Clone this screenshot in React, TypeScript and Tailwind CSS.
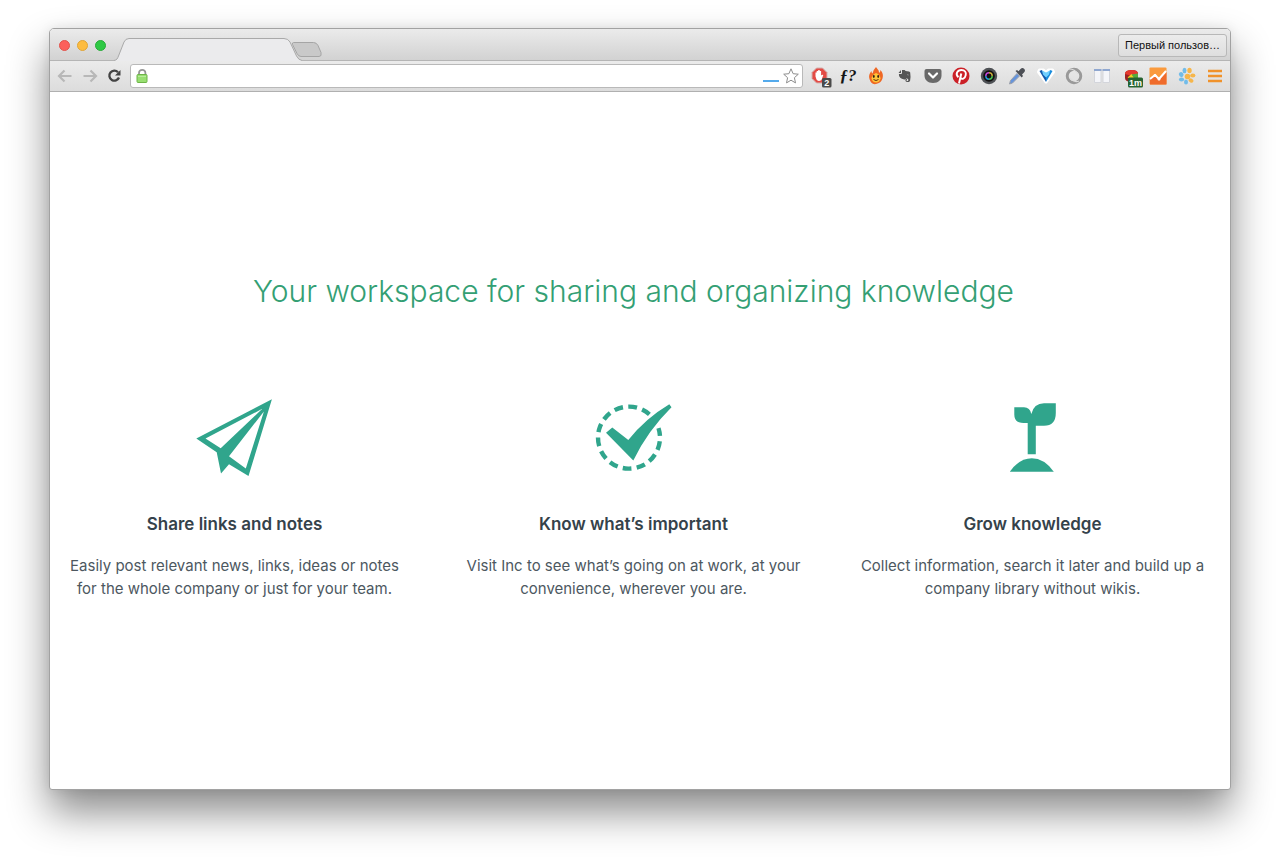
import React from 'react';

const extensionButton = 'flex h-[22px] w-5 items-center justify-center';

function Extension({ label, children }: { label: string; children: React.ReactNode }) {
  return (
    <button type="button" aria-label={label} className={extensionButton}>
      <svg width="22" height="22" viewBox="0 0 22 22" className="shrink-0 overflow-visible" aria-hidden="true">
        {children}
      </svg>
    </button>
  );
}

function TabStrip() {
  return (
    <div className="flex h-[31px] items-end bg-linear-to-b from-[#ebebeb] to-[#d2d2d2]">
      <div className="flex h-full items-center gap-[7px] pt-px pr-2 pl-[9px]">
        <button type="button" aria-label="Close window" className="size-[11px] rounded-full border border-[#e2534c] bg-[#fc605b]" />
        <button type="button" aria-label="Minimize window" className="size-[11px] rounded-full border border-[#e0a536] bg-[#fdbc40]" />
        <button type="button" aria-label="Zoom window" className="size-[11px] rounded-full border border-[#27ab38] bg-[#2ec944]" />
      </div>
      <button type="button" aria-label="Current tab" className="-mb-px h-[23px] w-[188px]">
        <svg width="188" height="23" viewBox="0 0 188 23" aria-hidden="true">
          <path d="M0 22.500C3 22 3.500 20.500 4.500 18L10 4Q11.500.5 15 .5H170Q174 .5 176 4L182.500 18Q184.500 22 188 22.500V23H0Z" fill="#ebebed" />
          <path d="M0 22.500C3 22 3.500 20.500 4.500 18L10 4Q11.500.5 15 .5H170Q174 .5 176 4L182.500 18Q184.500 22 188 22.500" fill="none" stroke="#a9a9a9" />
        </svg>
      </button>
      <button type="button" aria-label="New tab" className="-mb-px -ml-2 h-[23px] w-7">
        <svg width="28" height="23" viewBox="0 0 28 23" className="overflow-visible" aria-hidden="true">
          <path d="M-.5 4.500H19.500Q22.500 4.500 24 7.500L27 14.500Q28 18.500 25 18.500H7Q4.500 18.500 3 15.500L-1.500 6.500Q-2 4.500-.5 4.500Z" fill="#c9c9c9" stroke="#a5a5a5" />
        </svg>
      </button>
      <button type="button" className="mr-[3px] mb-[3px] ml-auto h-[23px] rounded-[3px] border border-[#b8b8b8] bg-linear-to-b from-[#ececec] to-[#dedede] px-[6px] font-['Liberation_Sans',Arial,sans-serif] text-[11px] whitespace-nowrap text-[#111]">
        Первый пользов…
      </button>
    </div>
  );
}

function AddressBar() {
  return (
    <div className="flex h-8 items-center border-t border-b border-t-[#b5b5b5] border-b-[#b0b0b0] bg-linear-to-b from-[#ebebeb] to-[#dcdcdc] pr-[5px] pl-[7px]">
      <div className="flex shrink-0 items-center gap-[9px] pr-[7px]">
        <button type="button" aria-label="Back" className="size-4">
          <svg width="16" height="16" viewBox="0 0 16 16" fill="none" stroke="#b8b8b8" strokeWidth="2.200" aria-hidden="true">
            <path d="M14.500 8H3M7.500 2.500 2 8l5.500 5.500" />
          </svg>
        </button>
        <button type="button" aria-label="Forward" className="size-4">
          <svg width="16" height="16" viewBox="0 0 16 16" fill="none" stroke="#b8b8b8" strokeWidth="2.200" aria-hidden="true">
            <path d="M1.500 8H13M8.500 2.500 14 8l-5.500 5.500" />
          </svg>
        </button>
        <button type="button" aria-label="Reload" className="size-4">
          <svg width="16" height="16" viewBox="0 0 16 16" aria-hidden="true">
            <path d="M11 4.200A5 5 0 1 0 12 9.500" fill="none" stroke="#444" strokeWidth="2.300" />
            <path d="M13.500 2v5.500H8Z" fill="#444" />
          </svg>
        </button>
      </div>
      <label className="flex h-6 min-w-0 flex-1 items-center rounded-[3px] border border-[#b9b9b9] bg-white pr-[3px] pl-1">
        <svg width="14" height="16" viewBox="0 0 14 16" className="shrink-0" aria-hidden="true">
          <path d="M4 7V5a3.200 3.200 0 0 1 6.400 0v2" fill="none" stroke="#969696" strokeWidth="1.800" />
          <rect x="2" y="6.500" width="10" height="8" rx="1" fill="#98df71" stroke="#6db448" />
          <path d="M3 8.500h8" stroke="#b8ec9b" />
        </svg>
        <input aria-label="Address" type="text" className="min-w-0 flex-1 bg-transparent px-1 font-['Liberation_Sans',Arial,sans-serif] text-sm outline-none" />
        <span className="mt-[10px] h-[2px] w-4 shrink-0 bg-[#54aaec]" />
        <button type="button" aria-label="Bookmark this page" className="ml-1 size-4 shrink-0">
          <svg width="16" height="16" viewBox="0 0 16 16" aria-hidden="true">
            <path d="m8 .8 2.100 4.900 5.200.5-3.900 3.500 1.100 5.200L8 12.200l-4.500 2.700 1.100-5.200L.7 6.200l5.200-.5Z" fill="#fff" stroke="#8d8d8d" strokeLinejoin="round" />
          </svg>
        </button>
      </label>
      <div className="ml-[7px] flex w-[415px] shrink-0 items-center justify-between">
        <Extension label="Ad blocker, 2 blocked">
          <path d="M7.500 3h6l4.500 4.500v6L13.500 18h-6L3 13.500v-6Z" fill="#e34b45" stroke="#d2b3b1" />
          <path d="M6.500 11.500V7.500h1.200V6h1.500V5h1.500v1h1.400v4.500q1-1.200 2.200-.5L12.500 15q-3.500 2-5-.5Z" fill="#fff" />
          <rect x="13" y="13" width="9.500" height="9.500" rx="1.500" fill="#4a4a4a" />
          <text x="17.700" y="21" textAnchor="middle" fill="#fff" fontFamily="Liberation Sans" fontWeight="bold" fontSize="9">2</text>
        </Extension>
        <Extension label="Font finder">
          <text x="11" y="16" textAnchor="middle" fill="#151515" fontFamily="Liberation Serif" fontStyle="italic" fontWeight="bold" fontSize="17">ƒ?</text>
        </Extension>
        <Extension label="Flame">
          <path d="M11 2C13 5 14 5 14 8q1.500-1 1.500-3 3.500 4 2 8.500T11 19 4.500 14Q3 10 6.500 6q0 2 1 2.500Q8 5 11 2Z" fill="#ef6724" />
          <path d="M11 8q4.500 2 4.500 5.500-1 4-4.500 4t-4.500-4Q7 10 11 8Z" fill="#ffc539" />
          <ellipse cx="8.800" cy="11.500" rx=".9" ry="1.400" fill="#312016" />
          <ellipse cx="13.200" cy="11.500" rx=".9" ry="1.400" fill="#312016" />
          <path d="M8.500 14.500q2.500 2 5 0" fill="none" stroke="#5b2b15" />
        </Extension>
        <Extension label="Web clipper">
          <path d="M8 5h2.200q1 .2 1.300.9l3.500.5q1 .3 1.200 1.200.7 4.200-.1 8.200-.4 1.200-1.600 1.100h-1.700q-1.600-.2-1.400-1.800.2-1.300 1.600-1.200v1.200q-.6 0-.5.6.1.4.7.4h1v-2q-1-1-2-.6-.7 1.300-2 .9-2.600-.4-4-1.700Q4.700 11.500 4.900 9H7q1 0 1-1Z" fill="#555" />
          <path d="M7 5V8H4.500Z" fill="#555" />
          <path d="M13 10q1-1 1.800.3Z" fill="#eee" />
        </Extension>
        <Extension label="Save to reading list">
          <path d="M4.500 4h13q2 0 2 2v4.500c0 4.200-3 7.500-8.500 7.500s-8.500-3.300-8.500-7.500V6q0-2 2-2Z" fill="#696969" />
          <path d="m7 8.500 4 4 4-4" fill="none" stroke="#fff" strokeWidth="2.200" strokeLinecap="round" strokeLinejoin="round" />
        </Extension>
        <Extension label="Pin it">
          <circle cx="11" cy="11" r="8.500" fill="#cb2027" />
          <path d="M9 18.500 11.300 8.500" fill="none" stroke="#fff" strokeWidth="2" />
          <path d="M8.400 12.200C4.800 9 7.500 5 11.400 5c3.500 0 5 2.300 4.300 5.200-.6 3.500-3.900 4.800-5.400 2.500" fill="none" stroke="#fff" strokeWidth="1.900" />
        </Extension>
        <Extension label="Camera">
          <circle cx="11" cy="11" r="8.200" fill="#4e5155" />
          <circle cx="11" cy="11" r="5.800" fill="#111" />
          <path d="M7.800 11a3.200 3.200 0 0 1 3.200-3.200" fill="none" stroke="#c244d8" strokeWidth="1.500" />
          <path d="M11 7.800a3.200 3.200 0 0 1 3.200 3.200" fill="none" stroke="#c9a93b" strokeWidth="1.500" />
          <path d="M14.200 11a3.200 3.200 0 0 1-3.200 3.200" fill="none" stroke="#48bd54" strokeWidth="1.500" />
          <path d="M11 14.200A3.200 3.200 0 0 1 7.800 11" fill="none" stroke="#2495d4" strokeWidth="1.500" />
        </Extension>
        <Extension label="Eyedropper">
          <path d="m11 8.500 2.500 2.500-7 7-3 1 1-3.500Z" fill="#6594dc" stroke="#9a9fa9" />
          <path d="m9.500 6 1.500-1 1.500 1.300 2-2.300q2-1.800 3.800 0 1.500 1.700-.3 3.500l-2 2L17 11l-1.300 1.500Z" fill="#4c4f55" />
        </Extension>
        <Extension label="Gem">
          <path d="M4.500 5h4L11 7.500 13.500 5h4l1 2-7.500 10L3.500 7Z" fill="#fff" stroke="#fff" strokeWidth="3" strokeLinejoin="round" />
          <path d="m4.500 6 2-1L11 9v8Z" fill="#1559ad" />
          <path d="m17.500 6-2-1L11 9v8Z" fill="#178bdc" />
          <path d="m7 5.500 4 2 4-2-1 4-3 3-3-3Z" fill="#70cfff" />
        </Extension>
        <Extension label="Ring">
          <circle cx="11" cy="11" r="6.800" fill="none" stroke="#999" strokeWidth="2.900" />
          <path d="M6 4q6 0 9 5M16 16q-5 2-9-3" fill="none" stroke="#dedede" strokeWidth="1.200" />
        </Extension>
        <Extension label="Split windows">
          <path d="M3.500 4.500h6.500v13H3.500zM12 4.500h6.500v13H12z" fill="#f4f5f9" stroke="#d3d5db" />
          <path d="M3 5h7.500M11.500 5H19" stroke="#8fa7d0" strokeWidth="2" />
        </Extension>
        <Extension label="Timer, 1 minute">
          <g transform="translate(4 0)">
            <path d="M2 9q0-4 7-4 6 0 6 4v4q0 4-6 4-7 0-7-4Z" fill="#9c2424" />
            <path d="M2 9q0-4 7-4 6 0 6 4l-6 2Z" fill="#e63a2e" />
            <path d="m8.500 9-4 3.500q4 2 8-.5Z" fill="#f0d320" />
            <path d="m8.500 9.500 6.500-1v4.500h-4Z" fill="#57aa3d" />
            <rect x="5" y="12.500" width="15" height="10" rx="1.500" fill="#276331" />
            <text x="12.500" y="20.500" textAnchor="middle" fill="#fff" fontFamily="Liberation Sans" fontWeight="bold" fontSize="9">1m</text>
          </g>
        </Extension>
        <Extension label="Analytics">
          <rect x="2.500" y="2.500" width="17" height="17" rx="1" fill="#fa9a3d" />
          <path d="m3 14 5-3.500 4 4L19.500 7v12.500H3Z" fill="#ef6b2c" />
          <path d="m3 14 5-4 4 4 7-8" fill="none" stroke="#fff" strokeWidth="2" />
          <circle cx="8" cy="10.500" r="1.500" fill="#fff" />
          <circle cx="12" cy="14" r="1.500" fill="#fff" />
        </Extension>
        <Extension label="Paw">
          <g fill="#f6b64b">
            <ellipse cx="13.500" cy="5.500" rx="2.200" ry="2.800" />
            <ellipse cx="16.800" cy="10.500" rx="2.600" ry="2" />
            <ellipse cx="15" cy="15.500" rx="2.600" ry="2" transform="rotate(30 15 15.500)" />
            <circle cx="11.500" cy="11.500" r="2.800" />
          </g>
          <g fill="#72bce9">
            <ellipse cx="8.500" cy="5.500" rx="2" ry="2.700" />
            <ellipse cx="5.200" cy="9.500" rx="2.200" ry="2.500" transform="rotate(-40 5.200 9.500)" />
            <ellipse cx="5.500" cy="14.500" rx="2.600" ry="2" />
            <ellipse cx="10" cy="17" rx="2" ry="2.500" />
          </g>
        </Extension>
        <Extension label="Menu">
          <path d="M4 6h14M4 11h14M4 16h14" stroke="#f0922b" strokeWidth="2.600" />
        </Extension>
      </div>
    </div>
  );
}

function PaperPlane() {
  return (
    <svg width="80" height="80" viewBox="0 0 80 80" aria-hidden="true">
      <path
        fillRule="evenodd"
        fill="#30a58c"
        d="M76.900.3 53.500 77 34 65.200 26 74.500 21.700 53.200 1.300 39.500ZM67.300 9.800 10.500 39.400 25.700 49.300ZM68.900 12.500 34 57.200 50.800 69.500Z"
      />
    </svg>
  );
}

function CheckBadge() {
  return (
    <svg width="80" height="80" viewBox="0 0 80 80" aria-hidden="true">
      <path d="M55.400 15.300A31 31 0 1 0 64.500 29.100" stroke="#30a58c" strokeWidth="4.400" fill="none" strokeDasharray="8.800 5.330" />
      <path fill="#30a58c" d="m12 33.700 6.300-5.200L34.300 41Q51.500 19.500 75.300 5.300L77.500 8.300Q53.500 32 39.300 61.500Z" />
    </svg>
  );
}

function Sprout() {
  return (
    <svg width="80" height="80" viewBox="0 0 80 80" aria-hidden="true">
      <path
        fill="#30a58c"
        d="M21.300 8.300H31Q37 8.300 38.300 15 41 4.300 51 4.300H62.800V14Q62.800 26.700 51 26.700H42.800V55.300H34.700V24H30.500Q21.300 24 21.300 15.500Z"
      />
      <path fill="#30a58c" d="M16.800 72.700Q26.500 59.300 38.800 59.300T60.800 72.700Z" />
    </svg>
  );
}

const features = [
  { title: 'Share links and notes', icon: <PaperPlane />, lines: ['Easily post relevant news, links, ideas or notes', 'for the whole company or just for your team.'] },
  { title: 'Know what’s important', icon: <CheckBadge />, lines: ['Visit Inc to see what’s going on at work, at your', 'convenience, wherever you are.'] },
  { title: 'Grow knowledge', icon: <Sprout />, lines: ['Collect information, search it later and build up a', 'company library without wikis.'] },
];

export default function App() {
  return (
    <div className="bg-white px-[49px] pt-7 pb-[70px]">
      <div className="overflow-hidden rounded-t-[5px] rounded-b-[3px] border border-[#a2a2a2] bg-white shadow-[0_22px_40px_rgba(0,0,0,0.46),0_0_12px_rgba(0,0,0,0.08)]">
        <header>
          <TabStrip />
          <AddressBar />
        </header>
        <main className="pt-[175px] pr-[22px] pb-[189px] pl-[9px] font-[Inter,sans-serif]">
          <h1 className="text-center text-[30px] leading-[48px] font-light text-[#349f74]">
            Your workspace for sharing and organizing knowledge
          </h1>
          <div className="grid grid-cols-3 gap-12 pt-[84px]">
            {features.map((feature) => (
              <section key={feature.title} className="flex flex-col items-center text-center">
                {feature.icon}
                <h2 className="pt-[33px] text-[17px] leading-6 font-semibold text-[#35424a]">{feature.title}</h2>
                <p className="pt-[18px] text-[15px] leading-[23px] text-[#4d585f]">
                  {feature.lines[0]}
                  <br />
                  {feature.lines[1]}
                </p>
              </section>
            ))}
          </div>
        </main>
      </div>
    </div>
  );
}
